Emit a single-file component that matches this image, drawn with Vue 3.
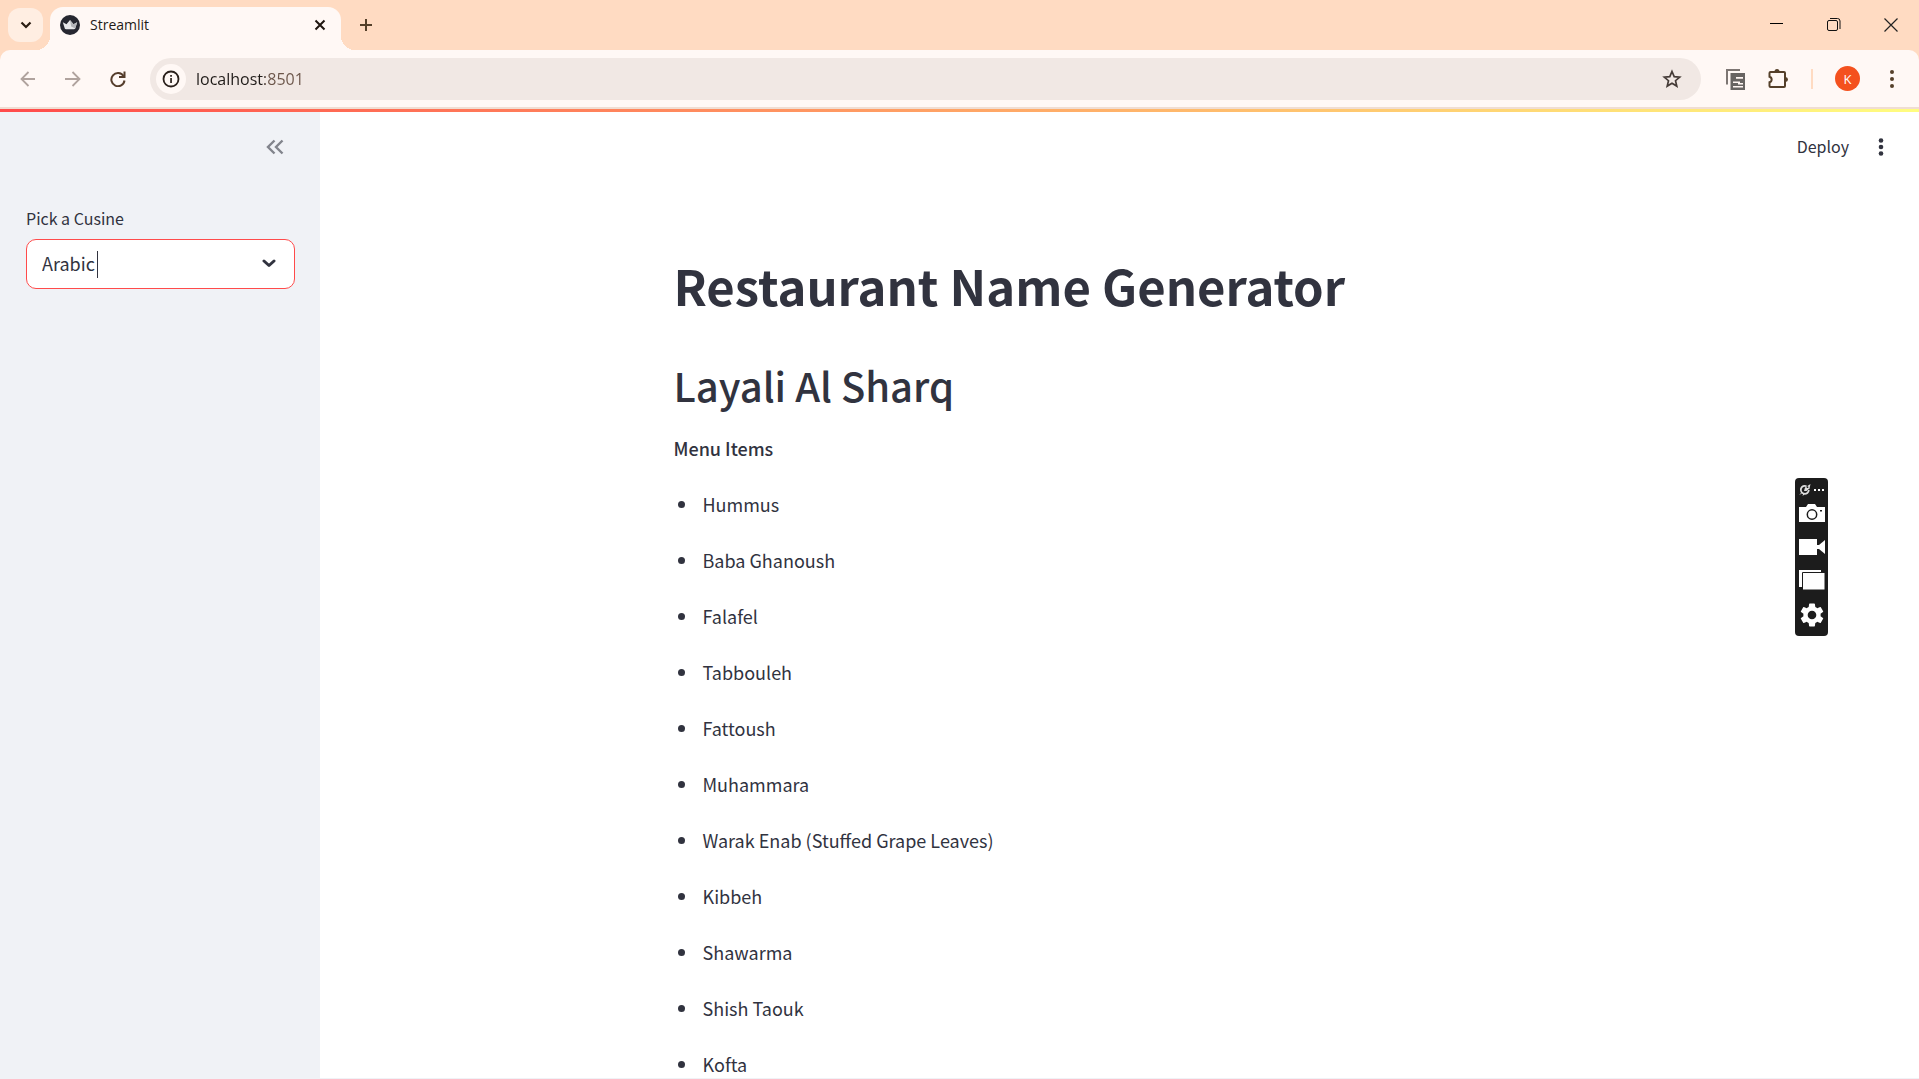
<script setup>
import { ref } from 'vue'

const cuisines = ['Arabic', 'Indian', 'Italian', 'Mexican', 'American']
const cuisine = ref('Arabic')
const address = ref('localhost:8501')
const restaurant = 'Layali Al Sharq'
const items = [
  'Hummus',
  'Baba Ghanoush',
  'Falafel',
  'Tabbouleh',
  'Fattoush',
  'Muhammara',
  'Warak Enab (Stuffed Grape Leaves)',
  'Kibbeh',
  'Shawarma',
  'Shish Taouk',
  'Kofta',
]
</script>

<template>
  <div class="window">
    <header class="tabs">
      <button class="tab-search" aria-label="Search tabs">
        <svg width="12" height="8" viewBox="0 0 12 8"><path d="M1.5 1.5 6 6l4.5-4.5" fill="none" stroke="#2a1c12" stroke-width="2.2" /></svg>
      </button>
      <div class="tab">
        <svg width="20" height="20" viewBox="0 0 20 20">
          <circle cx="10" cy="10" r="10" fill="#262730" />
          <path d="M2.800 7.200l3.700 2L10 5l3.500 4.200 3.700-2-2 6.300q-.3.700-1.200.7H6q-.9 0-1.200-.7z" fill="#e8e8ea" />
          <path d="M10 5l3.500 4.200 3.700-2-2 6.300-4-2z" fill="#b4b5b9" />
        </svg>
        <span class="tab-title">Streamlit</span>
        <button class="icon" aria-label="Close tab">
          <svg width="12" height="12" viewBox="0 0 12 12"><path d="M1.5 1.5l9 9m0-9l-9 9" stroke="#1f1610" stroke-width="2" /></svg>
        </button>
      </div>
      <button class="icon new-tab" aria-label="New tab">
        <svg width="14" height="14" viewBox="0 0 14 14"><path d="M7 1v12M1 7h12" stroke="#55402a" stroke-width="2" /></svg>
      </button>
      <div class="controls">
        <button class="icon" aria-label="Minimize"><svg width="14" height="14" viewBox="0 0 14 14"><path d="M0 5.500h13" stroke="#000" /></svg></button>
        <button class="icon" aria-label="Restore">
          <svg width="14" height="14" viewBox="0 0 14 14" fill="none" stroke="#111"><rect x=".5" y="2.5" width="10" height="10" rx="1.5" /><path d="M3 .5h7.500a2.500 2.500 0 0 1 2.500 2.500V11" /></svg>
        </button>
        <button class="icon" aria-label="Close"><svg width="14" height="14" viewBox="0 0 14 14"><path d="M.5.5l13 13m0-13l-13 13" stroke="#222" stroke-width="1.2" /></svg></button>
      </div>
    </header>

    <nav class="toolbar">
      <button class="icon" aria-label="Back"><svg width="16" height="16" viewBox="0 0 16 16"><path d="M15 8H2m6.500-7L1.500 8l7 7" fill="none" stroke="#b0a39e" stroke-width="1.8" /></svg></button>
      <button class="icon" aria-label="Forward"><svg width="16" height="16" viewBox="0 0 16 16"><path d="M0 8h14M7.500 1l7 7-7 7" fill="none" stroke="#b0a39e" stroke-width="1.8" /></svg></button>
      <button class="icon" aria-label="Reload">
        <svg width="16" height="16" viewBox="0 0 16 16"><path d="M13.500 5A6.600 6.600 0 1 0 14.500 9.500" fill="none" stroke="#553d2b" stroke-width="2" /><path d="M15.500.5v6.500H9V5h4.500V.5z" fill="#553d2b" /></svg>
      </button>
      <div class="omnibox">
        <button class="site-info" aria-label="View site information">
          <svg width="18" height="18" viewBox="0 0 18 18"><circle cx="9" cy="9" r="7.5" fill="none" stroke="#2a201b" stroke-width="1.8" /><path d="M8.200 8h1.700v5H8.200zM8.200 5h1.700v1.700H8.200z" fill="#2a201b" /></svg>
        </button>
        <input v-model="address" class="address" type="text" aria-label="Address" />
        <button class="icon" aria-label="Bookmark this tab">
          <svg width="20" height="20" viewBox="0 0 20 20"><path d="M10 2.500l2.200 5.100 5.500.5-4.200 3.600 1.300 5.400L10 14.200l-4.800 2.900 1.300-5.400L2.300 8.100l5.500-.5z" fill="none" stroke="#453b37" stroke-width="1.7" /></svg>
        </button>
      </div>
      <div class="actions">
        <button class="icon" aria-label="Copy page">
          <svg width="20" height="22" viewBox="0 0 20 22"><path d="M2 16.500V2H15" fill="none" stroke="#7d7673" stroke-width="2" /><path d="M5.500 5H20V22H5.500z" fill="#686462" /><path d="M11 9h7v1.800h-7zM8 13.500h7v1.600H8zM13 15h5v1.500h-5zM8 18h10v1.500H8z" fill="#fff6f3" /></svg>
        </button>
        <button class="icon" aria-label="Extensions">
          <svg width="22" height="22" viewBox="0 0 22 22"><path d="M3.500 4h13.500q1 0 1 1v13q0 1-1 1H3.500q-1 0-1-1v-3.700a2.900 2.900 0 0 0 0-5.600V5q0-1 1-1z" fill="none" stroke="#55402a" stroke-width="2" /><path d="M7.500 3.500a2.500 2.500 0 0 1 5 0zM18.500 9a2.500 2.500 0 0 1 0 5z" fill="#55402a" /></svg>
        </button>
        <span class="divider"></span>
        <button class="avatar" aria-label="Profile">K</button>
        <button class="icon" aria-label="Browser menu">
          <svg width="6" height="18" viewBox="0 0 6 18" fill="#55402a"><circle cx="3" cy="2" r="2" /><circle cx="3" cy="9" r="2" /><circle cx="3" cy="16" r="2" /></svg>
        </button>
      </div>
    </nav>

    <div class="decoration"></div>

    <div class="app">
      <aside class="sidebar">
        <div class="sidebar-head">
          <button class="icon" aria-label="Collapse sidebar">
            <svg width="18" height="16" viewBox="0 0 18 16"><path d="M8.500 1.500L2 8l6.500 6.500M16.500 1.500L10 8l6.500 6.500" fill="none" stroke="#82848c" stroke-width="2.4" /></svg>
          </button>
        </div>
        <label class="label" for="cuisine">Pick a Cusine</label>
        <div class="select-box">
          <select id="cuisine" v-model="cuisine">
            <option v-for="name in cuisines" :key="name">{{ name }}</option>
          </select>
          <span class="caret"></span>
          <svg class="chevron" width="14" height="9" viewBox="0 0 14 9"><path d="M2 2l5 4.500L12 2" fill="none" stroke="#31333f" stroke-width="3" stroke-linecap="round" stroke-linejoin="round" /></svg>
        </div>
      </aside>

      <main class="main">
        <div class="app-bar">
          <button class="deploy">Deploy</button>
          <button class="icon" aria-label="Main menu">
            <svg width="6" height="18" viewBox="0 0 6 18" fill="#31333f"><circle cx="3" cy="2.5" r="2.3" /><circle cx="3" cy="9" r="2.3" /><circle cx="3" cy="15.5" r="2.3" /></svg>
          </button>
        </div>
        <article class="content">
          <h1>Restaurant Name Generator</h1>
          <h2>{{ restaurant }}</h2>
          <p class="menu-title">Menu Items</p>
          <ul>
            <li v-for="item in items" :key="item">{{ item }}</li>
          </ul>
        </article>
      </main>
    </div>

    <div class="recorder">
      <div class="recorder-top">
        <svg width="12" height="12" viewBox="0 0 12 12"><path d="M3.500 8L1 10.500M5 9.500L4 11.500" fill="none" stroke="#ddd" /><path d="M7.500 2.200A4 4 0 1 0 9.800 6" fill="none" stroke="#ddd" stroke-width="1.8" /><path d="M5 7l1-3.500L11.500 0 10.500 4.500 7.500 7z" fill="#ddd" /><circle cx="8.500" cy="3.200" r=".9" fill="#1c1c1c" /></svg>
        <svg width="12" height="4" viewBox="0 0 12 4" fill="#fff"><path d="M1 1h2v2H1zM5 1h2v2H5zM9 1h2v2H9z" /></svg>
      </div>
      <div class="recorder-tools">
        <button class="icon" aria-label="Take screenshot">
          <svg width="26" height="20" viewBox="0 0 26 20"><path d="M0 3h7l2-3h7l2 3h8v15H0z" fill="#fff" /><circle cx="13" cy="10.500" r="4.700" fill="none" stroke="#1c1c1c" stroke-width="1.5" /><path d="M21 6h2v1.500h-2z" fill="#1c1c1c" /></svg>
        </button>
        <button class="icon" aria-label="Record video">
          <svg width="26" height="20" viewBox="0 0 26 20"><path d="M0 2h18v16H0z" fill="#fff" /><path d="M26 3v14l-6-5V8z" fill="#fff" /><path d="M18 8h3v4h-3z" fill="#fff" /></svg>
        </button>
        <button class="icon" aria-label="Open gallery">
          <svg width="26" height="20" viewBox="0 0 26 20"><path d="M0 0h22v17H0z" fill="#fff" /><path d="M3.500 2.500H26V20H3.500z" fill="#fff" stroke="#1c1c1c" /></svg>
        </button>
        <button class="icon" aria-label="Settings">
          <svg width="24" height="24" viewBox="2 2 20 20"><path d="M19.140 12.940c.04-.3.060-.61.060-.94s-.02-.64-.07-.94l2.030-1.580a.49.49 0 0 0 .12-.61l-1.920-3.320a.488.488 0 0 0-.59-.22l-2.390.96c-.5-.38-1.030-.7-1.620-.94l-.36-2.540a.484.484 0 0 0-.48-.41h-3.840c-.24 0-.43.17-.47.41l-.36 2.540c-.59.24-1.130.57-1.620.94l-2.390-.96a.49.49 0 0 0-.59.22L2.740 8.870c-.12.21-.08.47.12.61l2.030 1.580c-.05.3-.09.63-.09.94s.02.64.07.94l-2.030 1.580a.49.49 0 0 0-.12.61l1.920 3.320c.12.22.37.29.59.22l2.390-.96c.5.38 1.030.7 1.620.94l.36 2.540c.05.24.24.41.48.41h3.840c.24 0 .44-.17.47-.41l.36-2.540c.59-.24 1.130-.56 1.620-.94l2.390.96c.22.080.47 0 .59-.22l1.920-3.320a.49.49 0 0 0-.12-.61zM12 15.600a3.600 3.600 0 1 1 0-7.200 3.600 3.600 0 0 1 0 7.200z" fill="#fff" /></svg>
        </button>
      </div>
    </div>
  </div>
</template>

<style>
body {
  margin: 0;
  overflow: hidden;
}
</style>

<style scoped>
.window {
  --ui: "Open Sans", "Noto Sans", sans-serif;
  --app: "Noto Sans CJK SC", "Noto Sans", sans-serif;
  display: flex;
  flex-direction: column;
  height: 100vh;
  overflow: hidden;
  background: #ffdbc2;
  font-family: var(--ui);
}
.window * {
  box-sizing: border-box;
}
svg {
  display: block;
  flex: none;
}
button {
  padding: 0;
  border: 0;
  background: none;
  font: inherit;
  color: inherit;
}
.icon {
  display: grid;
  place-items: center;
}

/* tab strip */
.tabs {
  display: flex;
  align-items: center;
  height: 50px;
  flex: none;
  padding-left: 8px;
}
.tab-search {
  display: grid;
  place-items: center;
  width: 35px;
  height: 34px;
  border-radius: 12px;
  background: #ffeee2;
}
.tab {
  position: relative;
  display: flex;
  align-items: center;
  gap: 10px;
  align-self: flex-end;
  width: 291px;
  height: 43px;
  margin-left: 7px;
  padding: 0 15px 8px 10px;
  border-radius: 13px 13px 0 0;
  background: #fff8f5;
}
.tab::before,
.tab::after {
  content: "";
  position: absolute;
  bottom: 0;
  width: 14px;
  height: 14px;
}
.tab::before {
  right: 100%;
  background: radial-gradient(circle at 0 0, transparent 14px, #fff8f5 14px);
}
.tab::after {
  left: 100%;
  background: radial-gradient(circle at 100% 0, transparent 14px, #fff8f5 14px);
}
.tab-title {
  flex: 1;
  font-size: 14px;
  color: #1f1b18;
}
.new-tab {
  margin-left: 18px;
}
.controls {
  display: flex;
  gap: 43px;
  margin-left: auto;
  padding-right: 21px;
}

/* toolbar */
.toolbar {
  display: flex;
  align-items: center;
  gap: 29px;
  flex: none;
  height: 59px;
  padding: 0 24px 0 20px;
  border-bottom: 2px solid #f0ddd2;
  border-radius: 10px 10px 0 0;
  background: #fff8f5;
}
.omnibox {
  display: flex;
  align-items: center;
  flex: 1;
  gap: 10px;
  height: 42px;
  margin-left: -5px;
  padding: 0 19px 0 6px;
  border-radius: 21px;
  background: #f1e8e4;
}
.site-info {
  display: grid;
  place-items: center;
  width: 30px;
  height: 30px;
  border-radius: 50%;
  background: #fff8f5;
}
/* the port is dimmer than the host name */
.address {
  flex: 1;
  min-width: 0;
  padding: 0;
  border: 0;
  outline: 0;
  background: linear-gradient(90deg, #1f1b18 69px, #6b5549 69px);
  background-clip: text;
  color: transparent;
  font-family: var(--ui);
  font-size: 16px;
}
.actions {
  display: flex;
  align-items: center;
  gap: 22px;
  margin-left: -5px;
}
.divider {
  width: 2px;
  height: 20px;
  background: #ffdbc2;
}
.avatar {
  width: 25px;
  height: 25px;
  margin-right: 7px;
  border-radius: 50%;
  background: #f4511e;
  color: #fff;
  font-size: 13px;
}
.decoration {
  flex: none;
  height: 3px;
  background: linear-gradient(90deg, #ff4b4b, #fffd80);
}

/* app */
.app {
  display: flex;
  flex: 1;
  min-height: 0;
  background: #fff;
  color: #31333f;
  font-family: var(--app);
}
.sidebar {
  flex: none;
  width: 320px;
  padding: 0 25px 0 26px;
  background: #f0f2f6;
}
.sidebar-head {
  display: flex;
  justify-content: flex-end;
  padding: 27px 11px 51px;
}
.label {
  display: block;
  margin-bottom: 9px;
  font-size: 16px;
  line-height: 24px;
}
.select-box {
  position: relative;
}
.select-box select {
  display: block;
  width: 100%;
  height: 50px;
  padding: 0 15px 2px;
  border: 1px solid #ff4b4b;
  border-radius: 10px;
  outline: 0;
  appearance: none;
  background: #fff;
  color: inherit;
  font-family: var(--app);
  font-size: 18px;
}
.caret {
  position: absolute;
  left: 71px;
  top: 12px;
  width: 1px;
  height: 27px;
  background: #31333f;
  pointer-events: none;
}
.chevron {
  position: absolute;
  right: 19px;
  top: 20px;
  pointer-events: none;
}
.main {
  flex: 1;
  min-width: 0;
  overflow: hidden;
  border-bottom: 1px solid #f0f2f6;
}
.app-bar {
  display: flex;
  justify-content: flex-end;
  align-items: center;
  gap: 29px;
  height: 70px;
  padding-right: 35px;
}
.deploy {
  padding-bottom: 2px;
  font-size: 16px;
}
.content {
  max-width: 892px;
  margin: 0 auto;
  padding-top: 70px;
}
h1,
h2,
p,
ul {
  margin: 0;
}
h1 {
  font-size: 49px;
  font-weight: 700;
  line-height: 66px;
}
h2 {
  margin-top: 40px;
  font-size: 40px;
  font-weight: 500;
  line-height: 54px;
}
.menu-title {
  margin-top: 20px;
  font-size: 18px;
  font-weight: 500;
  line-height: 32px;
}
ul {
  display: flex;
  flex-direction: column;
  gap: 24px;
  margin-top: 24px;
  padding-left: 4px;
  list-style: none;
  font-size: 18px;
  line-height: 32px;
}
li {
  display: flex;
  align-items: center;
  gap: 18px;
}
li::before {
  content: "";
  width: 7px;
  height: 7px;
  border-radius: 50%;
  background: #31333f;
}

/* floating capture bar */
.recorder {
  position: absolute;
  right: 91px;
  top: 478px;
  display: flex;
  flex-direction: column;
  align-items: center;
  gap: 8px;
  width: 33px;
  padding: 6px 0 9px;
  border-radius: 4px;
  background: #1c1c1c;
}
.recorder-top {
  display: flex;
  align-items: center;
  gap: 2px;
}
.recorder-tools {
  display: flex;
  flex-direction: column;
  align-items: center;
  gap: 13px;
}
</style>
